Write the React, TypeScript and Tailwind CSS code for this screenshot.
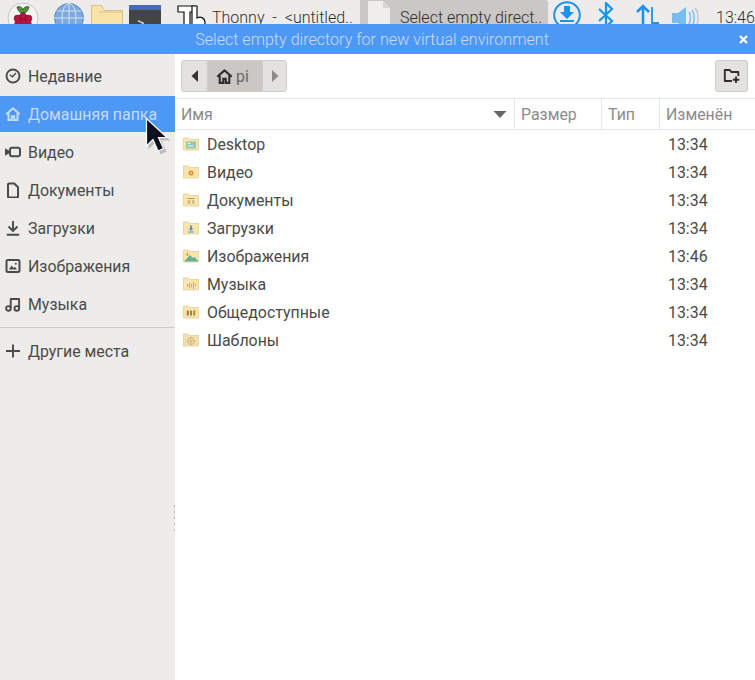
const FONT = "font-['Roboto',sans-serif]";

/* === SIDEBAR ICONS === */
function ClockIcon() {
  return (
    <svg width="16" height="16" viewBox="0 0 16 16" fill="none" stroke="currentColor" strokeWidth="1.900">
      <circle cx="8" cy="8" r="6.500" />
      <path d="M4.800 6.800 7.400 8.800 11 5" strokeWidth="1.300" />
    </svg>
  );
}
function HomeIcon({ size = 16 }: { size?: number }) {
  return (
    <svg width={size} height={size} viewBox="0 0 16 16" fill="none" stroke="currentColor" strokeWidth="2">
      <path d="M1.200 8.200 8 2.200 14.800 8.200" strokeLinejoin="round" />
      <path d="M3.500 7v7h3.300V10.200h2.400V14h3.300V7" />
    </svg>
  );
}
function VideoIcon() {
  return (
    <svg width="16" height="16" viewBox="0 0 16 16" fill="none">
      <path d="M0 4.200 4.200 6.800v2.400L0 11.800z" fill="currentColor" />
      <rect x="5" y="3.800" width="10" height="8.400" rx="2" stroke="currentColor" strokeWidth="2" />
    </svg>
  );
}
function DocIcon() {
  return (
    <svg width="16" height="16" viewBox="0 0 16 16" fill="none" stroke="currentColor" strokeWidth="2">
      <path d="M3 2.500a1 1 0 0 1 1-1h5.200l3.800 3.800v9.200a1 1 0 0 1-1 1H4a1 1 0 0 1-1-1z" strokeLinejoin="round" />
    </svg>
  );
}
function DownloadIcon() {
  return (
    <svg width="16" height="16" viewBox="0 0 16 16" fill="none" stroke="currentColor" strokeWidth="1.900">
      <path d="M8 1v9.500M3.500 6.500 8 11l4.500-4.500M1.800 14.800h12.400" />
    </svg>
  );
}
function ImageIcon() {
  return (
    <svg width="16" height="16" viewBox="0 0 16 16" fill="none">
      <rect x="1.500" y="2" width="13" height="12" rx="1.500" stroke="currentColor" strokeWidth="2" />
      <path d="M4 11.500 6.500 7.500 8.500 10l1.300-1.200 2.200 2.700z" fill="currentColor" />
      <circle cx="10.800" cy="5.800" r="1" fill="currentColor" />
    </svg>
  );
}
function MusicIcon() {
  return (
    <svg width="16" height="16" viewBox="0 0 16 16" fill="none" stroke="currentColor" strokeWidth="1.900">
      <circle cx="3.400" cy="12.400" r="2.300" />
      <circle cx="11.800" cy="12.400" r="2.300" />
      <path d="M5.700 12V3h8.400V12" strokeLinejoin="round" />
    </svg>
  );
}
function PlusIcon() {
  return (
    <svg width="16" height="16" viewBox="0 0 16 16" fill="none" stroke="currentColor" strokeWidth="1.900">
      <path d="M8 1.500v13M1 8h14" />
    </svg>
  );
}

/* === FILE ICONS === */
function FolderIcon({ children, tone = "#fae5ab" }: { children?: React.ReactNode; tone?: string }) {
  return (
    <svg width="16" height="16" viewBox="0 0 16 16">
      <path d="M0.500 2h5l1.500 1.500h8.500v10.500H0.500z" fill={tone} stroke="#e2cf98" strokeWidth="0.800" />
      {children}
    </svg>
  );
}

const FILES: { name: string; time: string; icon: React.ReactNode }[] = [
  {
    name: "Desktop",
    time: "13:34",
    icon: (
      <FolderIcon>
        <rect x="3" y="5.500" width="10" height="7" fill="#8ccbb8" />
        <rect x="4.500" y="7" width="3" height="1" fill="#eef" />
        <rect x="4.500" y="9.500" width="6" height="1" fill="#eef" />
      </FolderIcon>
    ),
  },
  {
    name: "Видео",
    time: "13:34",
    icon: (
      <FolderIcon>
        <circle cx="8" cy="9" r="2.500" fill="#e8883a" />
        <circle cx="8" cy="9" r="0.900" fill="#f8e4b0" />
      </FolderIcon>
    ),
  },
  {
    name: "Документы",
    time: "13:34",
    icon: (
      <FolderIcon>
        <path d="M4.500 6h7v1h-7zM4.500 8.500h3v1h-3zM4.500 10.500h3v1h-3zM9 8.500h2.500v1H9zM9 10.500h2.500v1H9z" fill="#a89a78" />
      </FolderIcon>
    ),
  },
  {
    name: "Загрузки",
    time: "13:34",
    icon: (
      <FolderIcon>
        <path d="M7 5.500h2v3h1.500L8 11 5.500 8.500H7z" fill="#4a9ad8" />
        <rect x="5" y="11.500" width="6" height="1" fill="#4a9ad8" />
      </FolderIcon>
    ),
  },
  {
    name: "Изображения",
    time: "13:46",
    icon: (
      <svg width="16" height="16" viewBox="0 0 16 16">
        <path d="M0.500 2h5l1.500 1.500h8.500v10.500H0.500z" fill="#fae5ab" stroke="#e2cf98" strokeWidth="0.800" />
        <path d="M1 13.500 7 7l3 3 1.500-1 4 4.500z" fill="#63b196" />
        <path d="M4 4.500h1v1.500h1.200v1H5v1H4V7H2.800V6H4z" fill="#e89a50" />
      </svg>
    ),
  },
  {
    name: "Музыка",
    time: "13:34",
    icon: (
      <FolderIcon>
        <path d="M4 8h1v3H4zM6 6.500h1v6H6zM8 7.500h1v4H8zM10 6h1v7h-1zM12 8h1v2h-1z" fill="#c79ae0" />
      </FolderIcon>
    ),
  },
  {
    name: "Общедоступные",
    time: "13:34",
    icon: (
      <FolderIcon>
        <path d="M3.800 6.500h2v5h-2z" fill="#c8604a" />
        <path d="M7 6.500h2v5H7z" fill="#6a9a5a" />
        <path d="M10.200 6.500h2v5h-2z" fill="#b8843a" />
      </FolderIcon>
    ),
  },
  {
    name: "Шаблоны",
    time: "13:34",
    icon: (
      <FolderIcon tone="#f3dfac">
        <circle cx="8" cy="9" r="3.500" fill="none" stroke="#c4ae7c" strokeWidth="0.800" />
        <path d="M8 5.500v7M4.500 9h7" stroke="#c4ae7c" strokeWidth="0.800" />
      </FolderIcon>
    ),
  },
];

const PLACES: { label: string; icon: React.ReactNode }[] = [
  { label: "Недавние", icon: <ClockIcon /> },
  { label: "Домашняя папка", icon: <HomeIcon /> },
  { label: "Видео", icon: <VideoIcon /> },
  { label: "Документы", icon: <DocIcon /> },
  { label: "Загрузки", icon: <DownloadIcon /> },
  { label: "Изображения", icon: <ImageIcon /> },
  { label: "Музыка", icon: <MusicIcon /> },
];

/* === TASKBAR === */
function Taskbar() {
  return (
    <div className="flex h-6 items-start overflow-hidden bg-[#edeceb] text-[16px] text-[#2e2e2e]">
      <svg className="ml-[7px] mt-[2px] shrink-0" width="32" height="32" viewBox="0 0 32 32">
        <circle cx="16" cy="16" r="15" fill="#f4f4f4" stroke="#c4c4c4" />
        <path d="M10 5c3-1 5 0 6 3 1-3 3-4 6-3-1 4-3 6-6 6s-5-2-6-6z" fill="#4f8f35" stroke="#1f4d14" strokeWidth="0.800" />
        <circle cx="16" cy="14.500" r="3.600" fill="#b5143f" stroke="#6d0c28" strokeWidth="0.600" />
        <circle cx="10.500" cy="16.500" r="3.400" fill="#b5143f" stroke="#6d0c28" strokeWidth="0.600" />
        <circle cx="21.500" cy="16.500" r="3.400" fill="#b5143f" stroke="#6d0c28" strokeWidth="0.600" />
        <circle cx="16" cy="20.500" r="3.600" fill="#b5143f" stroke="#6d0c28" strokeWidth="0.600" />
        <circle cx="10.500" cy="22" r="3.200" fill="#b5143f" />
        <circle cx="21.500" cy="22" r="3.200" fill="#b5143f" />
      </svg>
      <svg className="ml-[15px] mt-[3px] shrink-0" width="30" height="30" viewBox="0 0 30 30" fill="none">
        <circle cx="15" cy="15" r="14.500" fill="#7da9de" stroke="#5c86bc" />
        <path d="M15 0v30M0 15h30M3 8h24M3 22h24" stroke="#d4e2f4" />
        <ellipse cx="15" cy="15" rx="7" ry="14.500" stroke="#d4e2f4" />
      </svg>
      <svg className="ml-[7px] mt-[5px] shrink-0" width="32" height="30" viewBox="0 0 32 30">
        <path d="M0.500 0.500h10l3 5h18v24H0.500z" fill="#f8e3a9" stroke="#d8c288" />
        <path d="M8 7h23.500" stroke="#d8c288" />
      </svg>
      <div className="ml-[6px] mt-[5px] w-8 shrink-0">
        <div className="h-[5px] bg-[#4a68b8]" />
        <div className="h-6 bg-[#444] pl-[8px] pt-[5px] text-[14px] leading-4 text-[#ddd]">&gt;</div>
      </div>
      <svg className="ml-4 mt-[5px] shrink-0" width="29" height="26" viewBox="0 0 29 26" fill="#fff" stroke="#111" strokeWidth="1.200">
        <path d="M1 1h17v6h-5v17H7V7H1z" />
        <path d="M15 1h5v12c4-2 8 0 8 5s-4 7-8 6l-5-1z" />
      </svg>
      <span className="ml-[6px] mt-[8px] w-[148px] shrink-0 whitespace-pre font-light leading-5">Thonny  -  &lt;untitled..</span>
      <div className="flex h-6 w-[188px] shrink-0 items-start rounded-tr-[3px] bg-[#cbc7c4] pl-2">
        <svg className="mt-[1px] shrink-0" width="22" height="24" viewBox="0 0 22 24">
          <path d="M0 0h15l7 7v17H0z" fill="#efeeed" />
          <path d="M15 0v7h7z" fill="#d8d6d4" />
        </svg>
        <span className="ml-[10px] mt-[8px] whitespace-nowrap font-light leading-5">Select empty direct..</span>
      </div>
      <svg className="ml-[5px] mt-[1px] shrink-0" width="28" height="28" viewBox="0 0 28 28" fill="none">
        <circle cx="14" cy="14" r="12.800" stroke="#1c93ec" strokeWidth="2" />
        <path d="M11 5h6v6h4l-7 7-7-7h4z" fill="#1c93ec" />
        <path d="M7 20h14" stroke="#1c93ec" strokeWidth="2" />
      </svg>
      <svg className="ml-[17px] mt-[2px] shrink-0" width="16" height="26" viewBox="0 0 16 26" fill="none" stroke="#1c93ec" strokeWidth="2.200">
        <path d="M1 7l13 12-6 6V1l6 6L1 19" />
      </svg>
      <svg className="ml-[21px] mt-[3px] shrink-0" width="25" height="24" viewBox="0 0 25 24" fill="none" stroke="#1c93ec" strokeWidth="2.600">
        <path d="M8 24V3M2 9l6-6 6 6" />
        <path d="M17 4v17M17 20h7" strokeWidth="1.800" />
      </svg>
      <svg className="ml-[12px] mt-[6px] shrink-0" width="28" height="24" viewBox="0 0 28 24" fill="none">
        <path d="M0 7h6l8-6v22l-8-6H0z" fill="#79bdf0" />
        <path d="M17 6c2 3 2 9 0 12M20 4c3 4 3 12 0 16" stroke="#79bdf0" strokeWidth="1.500" />
        <path d="M23 2c4 5 4 15 0 20" stroke="#c8c8c8" strokeWidth="1.500" />
      </svg>
      <span className="ml-4 mt-[8px] whitespace-nowrap font-light leading-5">13:46</span>
    </div>
  );
}

/* === APP === */
export default function App() {
  return (
    <div className={`${FONT} relative flex h-[680px] w-[755px] flex-col overflow-hidden bg-white text-[15.9px]`}>
      <Taskbar />

      {/* === TITLE BAR === */}
      <div className="relative flex h-[30px] shrink-0 items-center justify-center bg-[#4d97f5] pt-[2px] text-[#c6dcfb]">
        <span className="mr-[11px] text-[16.1px] font-light">Select empty directory for new virtual environment</span>
        <svg className="absolute right-[7px] top-[11px]" width="9" height="9" viewBox="0 0 9 9" stroke="#fff" strokeWidth="2.200">
          <path d="M1 1l7 7M8 1 1 8" />
        </svg>
      </div>

      <div className="flex min-h-0 flex-1">
        {/* === SIDEBAR === */}
        <aside className="relative w-[175px] shrink-0 bg-[#edeceb] pt-1 text-[#4a4a4a]">
          <div className="flex flex-col gap-[2px]">
            {PLACES.map((p) => (
              <div
                key={p.label}
                className={`flex h-9 items-center pl-[5px] ${p.label === "Домашняя папка" ? "bg-[#4d97f5] text-[#c6dcfb]" : ""}`}
              >
                {p.icon}
                <span className="ml-[7px] pt-[2px]">{p.label}</span>
              </div>
            ))}
          </div>
          <div className="mt-[5px] h-px bg-[#cfcdca]" />
          <div className="mt-[5px] flex h-9 items-center pl-[5px]">
            <PlusIcon />
            <span className="ml-[7px] pt-[2px]">Другие места</span>
          </div>
          {/* pane grip */}
          <div className="absolute right-0 top-[451px] flex w-px flex-col gap-[4px]">
            <div className="h-[2px] bg-[#b5b3b0]" />
            <div className="h-[2px] bg-[#b5b3b0]" />
            <div className="h-[2px] bg-[#b5b3b0]" />
            <div className="h-[2px] bg-[#b5b3b0]" />
            <div className="h-[2px] bg-[#b5b3b0]" />
          </div>
        </aside>

        <main className="flex min-w-0 flex-1 flex-col">
          {/* === PATH BAR === */}
          <div className="flex h-[45px] shrink-0 items-start justify-between border-b border-[#e8e7e6] pl-[6px] pr-[7px] pt-[6px]">
            <div className="flex h-8 w-[106px] rounded-[3px] border border-[#cfcdca] bg-[#e3e2e0]">
              <div className="flex w-[26px] items-center justify-center border-r border-[#cfcdca]">
                <svg width="8" height="12" viewBox="0 0 8 12"><path d="M7 0v12L0.500 6z" fill="#333" /></svg>
              </div>
              <div className="flex w-[54px] items-center gap-[3px] bg-[#cbc7c4] pl-2 text-[#666]">
                <span className="text-[#2e2e2e]"><HomeIcon size={17} /></span>
                <span className="pt-[2px]">pi</span>
              </div>
              <div className="flex flex-1 items-center justify-center border-l border-[#cfcdca]">
                <svg width="8" height="12" viewBox="0 0 8 12"><path d="M1 0v12L7.500 6z" fill="#8c8c8c" /></svg>
              </div>
            </div>
            <div className="flex h-8 w-[33px] items-center justify-center rounded-[3px] border border-[#cfcdca] bg-[#e3e2e0]">
              <svg width="18" height="16" viewBox="0 0 18 16" fill="none" stroke="#2e2e2e" strokeWidth="1.900">
                <path d="M9 13H1.800V2h5l1.500 2h7v4" strokeLinejoin="round" />
                <path d="M13 8.500v6.500M9.800 11.800h6.500" />
              </svg>
            </div>
          </div>

          {/* === COLUMN HEADERS === */}
          <div className="flex h-[31px] shrink-0 border-b border-[#e8e7e6] text-[#8b8b8b]">
            <div className="flex w-[340px] items-center justify-between border-r border-[#e8e7e6] pl-[6px] pr-[7px]">
              <span className="pt-[2px]">Имя</span>
              <svg width="14" height="7" viewBox="0 0 14 7"><path d="M0.500 0h13L7 7z" fill="#666" /></svg>
            </div>
            <div className="flex w-[87px] items-center border-r border-[#e8e7e6] pl-[6px] pt-[2px]">Размер</div>
            <div className="flex w-[58px] items-center border-r border-[#e8e7e6] pl-[6px] pt-[2px]">Тип</div>
            <div className="flex flex-1 items-center pl-[6px] pt-[2px]">Изменён</div>
          </div>

          {/* === FILE ROWS === */}
          <div className="text-[#4a4a4a]">
            {FILES.map((f) => (
              <div key={f.name} className="flex h-[28px] items-center">
                <div className="ml-2 shrink-0">{f.icon}</div>
                <span className="ml-2 w-[461px] shrink-0 pt-[2px]">{f.name}</span>
                <span className="pt-[2px]">{f.time}</span>
              </div>
            ))}
          </div>
        </main>
      </div>

      {/* === MOUSE CURSOR === */}
      <svg className="absolute left-[145px] top-[117px]" width="26" height="40" viewBox="0 0 26 40">
        <path d="M2 3 2 31 9 24 14 36 20 33 15 22 24 22z" fill="#000" opacity="0.2" transform="translate(1.500 1.500)" />
        <path d="M1.500 1.500V29L8 22.500 13 34 18.500 31.500 13.500 20.500H22z" fill="#0d1020" stroke="#fff" strokeWidth="1.200" />
      </svg>
    </div>
  );
}
